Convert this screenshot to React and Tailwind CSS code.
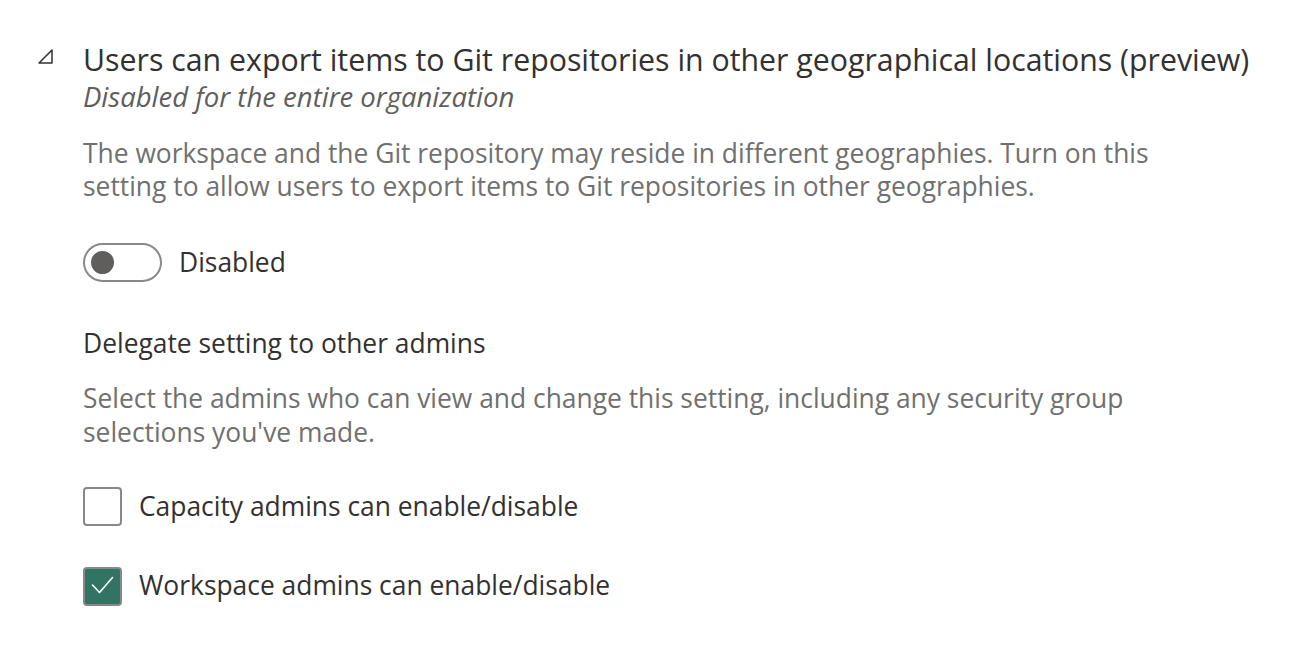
export default function App() {
  return (
    <div className="min-h-screen w-full bg-white font-['Open_Sans',sans-serif] text-[#323130]">
      <div className="flex pt-[41px] pl-[37px]">
        {/* Collapse arrow */}
        <div className="w-[46px] pt-[7px]">
          <svg width="17" height="17" viewBox="0 0 17 17">
            <path d="M15 2 L15 15 L2 15 Z" fill="none" stroke="#323130" strokeWidth="1.5" strokeLinejoin="round" />
          </svg>
        </div>

        <div className="flex flex-col">
          <h2 className="text-[30.3px] leading-[38px] text-[#323130]">
            Users can export items to Git repositories in other geographical locations (preview)
          </h2>
          <p className="mt-[2px] text-[27.5px] leading-[32px] italic text-[#605e5c]">
            Disabled for the entire organization
          </p>

          <p className="mt-[24px] max-w-[1090px] text-[26.4px] leading-[33px] text-[#707070]">
            The workspace and the Git repository may reside in different geographies. Turn on this setting to allow users to export items to Git repositories in other geographies.
          </p>

          {/* Toggle */}
          <div className="mt-[40px] flex items-center gap-[17px]">
            <button className="flex h-[39px] w-[79px] items-center rounded-full border-2 border-[#8a8886] bg-white pl-[6px]">
              <span className="h-[23px] w-[23px] rounded-full bg-[#605e5c]" />
            </button>
            <span className="text-[26.4px] text-[#323130]">Disabled</span>
          </div>

          <h3 className="mt-[44px] text-[26.4px] leading-[32px] text-[#323130]">
            Delegate setting to other admins
          </h3>
          <p className="mt-[22px] max-w-[1090px] text-[26.4px] leading-[34px] text-[#707070]">
            Select the admins who can view and change this setting, including any security group selections you've made.
          </p>

          {/* Checkboxes */}
          <div className="mt-[38px] flex flex-col gap-[40px]">
            <label className="flex items-center gap-[17px]">
              <span className="h-[39px] w-[39px] rounded-[4px] border-2 border-[#8a8886] bg-white" />
              <span className="text-[26.4px] text-[#323130]">Capacity admins can enable/disable</span>
            </label>
            <label className="flex items-center gap-[17px]">
              <span className="flex h-[39px] w-[39px] items-center justify-center rounded-[4px] border-2 border-[#8a8886] bg-[#317463]">
                <svg width="24" height="24" viewBox="0 0 24 24">
                  <path d="M1.5 11 L8.5 18.5 L21.5 3.5" fill="none" stroke="#ffffff" strokeWidth="1.6" strokeLinecap="round" strokeLinejoin="round" />
                </svg>
              </span>
              <span className="text-[26.4px] text-[#323130]">Workspace admins can enable/disable</span>
            </label>
          </div>
        </div>
      </div>
    </div>
  )
}
